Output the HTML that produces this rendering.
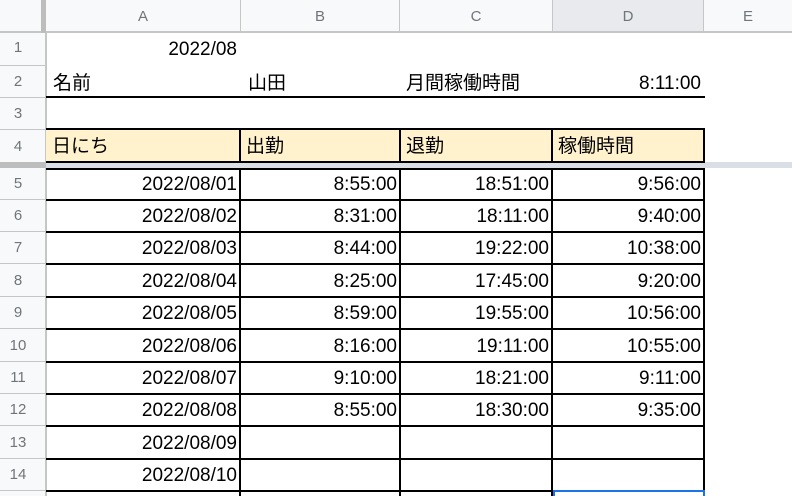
<!DOCTYPE html>
<html><head><meta charset="utf-8"><style>
body{margin:0;width:792px;height:496px;overflow:hidden;background:#fff;font-family:"Liberation Sans","Noto Sans CJK JP",sans-serif;position:relative}
.a{position:absolute;box-sizing:border-box}
.t{position:absolute;font-size:19px;color:#000;line-height:20px;white-space:nowrap}
.r{text-align:right}
.hd{color:#70757a;font-size:15px;text-align:center;line-height:20px}
</style></head><body>
<div class="a" style="left:0;top:0;width:792px;height:33px;background:#f8f9fa;border-bottom:2px solid #c4c7c5"></div>
<div class="a" style="left:552px;top:0;width:152px;height:33px;background:#e8eaed;border-bottom:2px solid #c4c7c5"></div>
<div class="a" style="left:41px;top:0;width:5px;height:33px;background:#bdbdbd"></div>
<div class="a" style="left:240px;top:0;width:1px;height:33px;background:#c4c7c5"></div>
<div class="a" style="left:399px;top:0;width:1px;height:33px;background:#c4c7c5"></div>
<div class="a" style="left:552px;top:0;width:1px;height:33px;background:#c4c7c5"></div>
<div class="a" style="left:703px;top:0;width:1px;height:33px;background:#c4c7c5"></div>
<div class="t hd" style="left:46px;width:194px;top:7px">A</div>
<div class="t hd" style="left:240px;width:160px;top:7px">B</div>
<div class="t hd" style="left:400px;width:152px;top:7px">C</div>
<div class="t hd" style="left:552px;width:152px;top:7px">D</div>
<div class="t hd" style="left:704px;width:88px;top:7px">E</div>
<div class="a" style="left:0;top:33px;width:47px;height:463px;background:#f8f9fa;border-right:2px solid #c4c7c5"></div>
<div class="a" style="left:46px;top:129px;width:659px;height:33px;background:#fff2cc"></div>
<div class="a" style="left:46px;top:162px;width:746px;height:6px;background:#dadfe6"></div>
<div class="a" style="left:0;top:162px;width:46px;height:6px;background:#bdbdbd"></div>
<div class="t hd" style="left:0;width:36px;top:38px">1</div>
<div class="t hd" style="left:0;width:36px;top:72px">2</div>
<div class="t hd" style="left:0;width:36px;top:104px">3</div>
<div class="t hd" style="left:0;width:36px;top:137px">4</div>
<div class="t hd" style="left:0;width:36px;top:174px">5</div>
<div class="t hd" style="left:0;width:36px;top:206px">6</div>
<div class="t hd" style="left:0;width:36px;top:238px">7</div>
<div class="t hd" style="left:0;width:36px;top:271px">8</div>
<div class="t hd" style="left:0;width:36px;top:303px">9</div>
<div class="t hd" style="left:0;width:36px;top:336px">10</div>
<div class="t hd" style="left:0;width:36px;top:368px">11</div>
<div class="t hd" style="left:0;width:36px;top:400px">12</div>
<div class="t hd" style="left:0;width:36px;top:433px">13</div>
<div class="t hd" style="left:0;width:36px;top:465px">14</div>
<div class="a" style="left:0;top:65px;width:46px;height:1px;background:#c4c7c5"></div>
<div class="a" style="left:0;top:97px;width:46px;height:1px;background:#c4c7c5"></div>
<div class="a" style="left:0;top:129px;width:46px;height:1px;background:#c4c7c5"></div>
<div class="a" style="left:46px;top:96px;width:659px;height:2px;background:#000"></div>
<div class="a" style="left:46px;top:128px;width:659px;height:2px;background:#000"></div>
<div class="a" style="left:46px;top:161px;width:659px;height:2px;background:#000"></div>
<div class="a" style="left:239px;top:129px;width:2px;height:33px;background:#000"></div>
<div class="a" style="left:399px;top:129px;width:2px;height:33px;background:#000"></div>
<div class="a" style="left:551px;top:129px;width:2px;height:33px;background:#000"></div>
<div class="a" style="left:703px;top:129px;width:2px;height:33px;background:#000"></div>
<div class="a" style="left:239px;top:168px;width:2px;height:328px;background:#000"></div>
<div class="a" style="left:399px;top:168px;width:2px;height:328px;background:#000"></div>
<div class="a" style="left:551px;top:168px;width:2px;height:328px;background:#000"></div>
<div class="a" style="left:703px;top:168px;width:2px;height:324px;background:#000"></div>
<div class="a" style="left:46px;top:168px;width:659px;height:2px;background:#000"></div>
<div class="a" style="left:46px;top:199px;width:659px;height:2px;background:#000"></div>
<div class="a" style="left:46px;top:231px;width:659px;height:2px;background:#000"></div>
<div class="a" style="left:46px;top:263px;width:659px;height:2px;background:#000"></div>
<div class="a" style="left:46px;top:296px;width:659px;height:2px;background:#000"></div>
<div class="a" style="left:46px;top:328px;width:659px;height:2px;background:#000"></div>
<div class="a" style="left:46px;top:361px;width:659px;height:2px;background:#000"></div>
<div class="a" style="left:46px;top:393px;width:659px;height:2px;background:#000"></div>
<div class="a" style="left:46px;top:425px;width:659px;height:2px;background:#000"></div>
<div class="a" style="left:46px;top:458px;width:659px;height:2px;background:#000"></div>
<div class="a" style="left:46px;top:490px;width:659px;height:2px;background:#000"></div>
<div class="a" style="left:0;top:199px;width:46px;height:1px;background:#c4c7c5"></div>
<div class="a" style="left:0;top:231px;width:46px;height:1px;background:#c4c7c5"></div>
<div class="a" style="left:0;top:263px;width:46px;height:1px;background:#c4c7c5"></div>
<div class="a" style="left:0;top:296px;width:46px;height:1px;background:#c4c7c5"></div>
<div class="a" style="left:0;top:328px;width:46px;height:1px;background:#c4c7c5"></div>
<div class="a" style="left:0;top:361px;width:46px;height:1px;background:#c4c7c5"></div>
<div class="a" style="left:0;top:393px;width:46px;height:1px;background:#c4c7c5"></div>
<div class="a" style="left:0;top:425px;width:46px;height:1px;background:#c4c7c5"></div>
<div class="a" style="left:0;top:458px;width:46px;height:1px;background:#c4c7c5"></div>
<div class="a" style="left:0;top:490px;width:46px;height:1px;background:#c4c7c5"></div>
<div class="a" style="left:553px;top:490px;width:152px;height:6px;border:2px solid #1a73e8;border-bottom:none"></div>
<div class="t r" style="left:46px;width:191px;top:40px">2022/08</div>
<div class="t" style="left:53px;top:74px">名前</div>
<div class="t" style="left:248px;top:74px">山田</div>
<div class="t" style="left:406px;top:74px">月間稼働時間</div>
<div class="t r" style="left:552px;width:149px;top:74px">8:11:00</div>
<div class="t" style="left:52px;top:137px">日にち</div>
<div class="t" style="left:246px;top:137px">出勤</div>
<div class="t" style="left:406px;top:137px">退勤</div>
<div class="t" style="left:558px;top:137px">稼働時間</div>

<div class="t r" style="left:46px;width:191px;top:175px">2022/08/01</div><div class="t r" style="left:240px;width:157px;top:175px">8:55:00</div><div class="t r" style="left:400px;width:149px;top:175px">18:51:00</div><div class="t r" style="left:552px;width:149px;top:175px">9:56:00</div>
<div class="t r" style="left:46px;width:191px;top:207px">2022/08/02</div><div class="t r" style="left:240px;width:157px;top:207px">8:31:00</div><div class="t r" style="left:400px;width:149px;top:207px">18:11:00</div><div class="t r" style="left:552px;width:149px;top:207px">9:40:00</div>
<div class="t r" style="left:46px;width:191px;top:239px">2022/08/03</div><div class="t r" style="left:240px;width:157px;top:239px">8:44:00</div><div class="t r" style="left:400px;width:149px;top:239px">19:22:00</div><div class="t r" style="left:552px;width:149px;top:239px">10:38:00</div>
<div class="t r" style="left:46px;width:191px;top:272px">2022/08/04</div><div class="t r" style="left:240px;width:157px;top:272px">8:25:00</div><div class="t r" style="left:400px;width:149px;top:272px">17:45:00</div><div class="t r" style="left:552px;width:149px;top:272px">9:20:00</div>
<div class="t r" style="left:46px;width:191px;top:304px">2022/08/05</div><div class="t r" style="left:240px;width:157px;top:304px">8:59:00</div><div class="t r" style="left:400px;width:149px;top:304px">19:55:00</div><div class="t r" style="left:552px;width:149px;top:304px">10:56:00</div>
<div class="t r" style="left:46px;width:191px;top:337px">2022/08/06</div><div class="t r" style="left:240px;width:157px;top:337px">8:16:00</div><div class="t r" style="left:400px;width:149px;top:337px">19:11:00</div><div class="t r" style="left:552px;width:149px;top:337px">10:55:00</div>
<div class="t r" style="left:46px;width:191px;top:369px">2022/08/07</div><div class="t r" style="left:240px;width:157px;top:369px">9:10:00</div><div class="t r" style="left:400px;width:149px;top:369px">18:21:00</div><div class="t r" style="left:552px;width:149px;top:369px">9:11:00</div>
<div class="t r" style="left:46px;width:191px;top:401px">2022/08/08</div><div class="t r" style="left:240px;width:157px;top:401px">8:55:00</div><div class="t r" style="left:400px;width:149px;top:401px">18:30:00</div><div class="t r" style="left:552px;width:149px;top:401px">9:35:00</div>
<div class="t r" style="left:46px;width:191px;top:434px">2022/08/09</div>
<div class="t r" style="left:46px;width:191px;top:466px">2022/08/10</div>
</body></html>
